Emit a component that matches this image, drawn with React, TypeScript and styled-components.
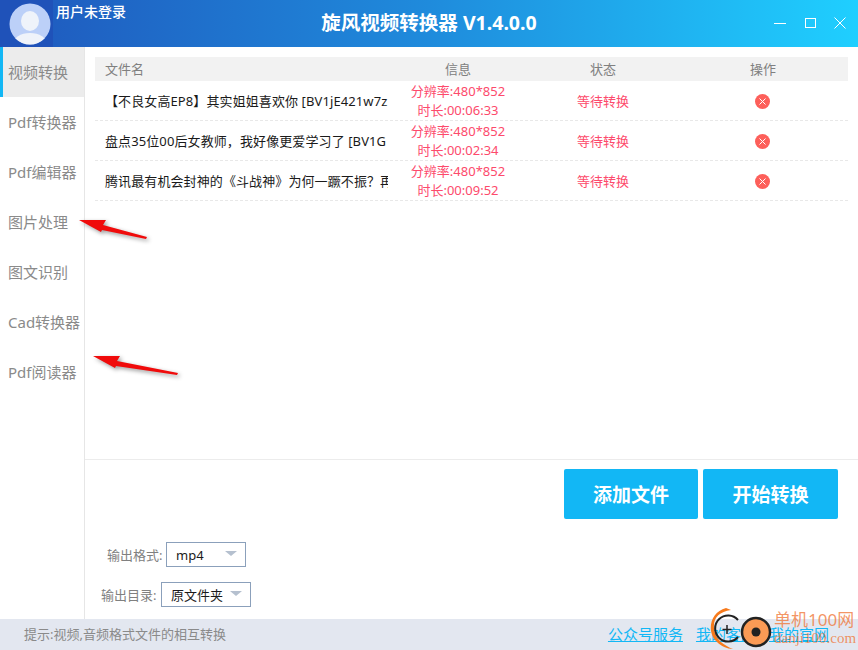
import React from 'react'
import styled, { createGlobalStyle } from 'styled-components'

const FONT = `"Noto Sans", "Noto Sans CJK SC", sans-serif`

const files = [
  { name: '【不良女高EP8】其实姐姐喜欢你 [BV1jE421w7z', time: '00:06:33' },
  { name: '盘点35位00后女教师，我好像更爱学习了 [BV1G', time: '00:02:34' },
  { name: '腾讯最有机会封神的《斗战神》为何一蹶不振？再', time: '00:09:52' },
]

const navItems = ['视频转换', 'Pdf转换器', 'Pdf编辑器', '图片处理', '图文识别', 'Cad转换器', 'Pdf阅读器']

const App = () => {
  return (
    <Window>
      <GlobalStyle />
      <TitleBar>
        <AvatarBox>
          <svg width="42" height="42" viewBox="0 0 42 42">
            <defs>
              <clipPath id="av">
                <circle cx="21" cy="21" r="20.5" />
              </clipPath>
            </defs>
            <circle cx="21" cy="21" r="20.5" fill="#bcd0f8" />
            <g clipPath="url(#av)" fill="#eff3fa">
              <ellipse cx="21" cy="18" rx="9" ry="10" />
              <ellipse cx="21" cy="41" rx="17" ry="11" />
            </g>
          </svg>
        </AvatarBox>
        <UserName>用户未登录</UserName>
        <AppTitle>旋风视频转换器 V1.4.0.0</AppTitle>
        <WindowControls>
          <svg width="12" height="12" viewBox="0 0 12 12">
            <path d="M0 6.5h12" stroke="#fff" strokeWidth="1" />
          </svg>
          <svg width="12" height="12" viewBox="0 0 12 12">
            <rect x="1.5" y="1.5" width="10" height="9" fill="none" stroke="#fff" strokeWidth="1" />
          </svg>
          <svg width="12" height="12" viewBox="0 0 12 12">
            <path d="M.5.5l11 11M11.5.5l-11 11" stroke="#fff" strokeWidth="1" fill="none" />
          </svg>
        </WindowControls>
      </TitleBar>

      <Body>
        <Sidebar>
          {navItems.map((item, i) => (
            <NavItem key={item} $active={i === 0}>
              {item}
            </NavItem>
          ))}
        </Sidebar>
        <Main>
          <TableArea>
            <TableHead>
              <NameHead>文件名</NameHead>
              <InfoCell>信息</InfoCell>
              <div>状态</div>
              <ActionCell>操作</ActionCell>
            </TableHead>
            {files.map((file) => (
              <Row key={file.time}>
                <NameCell>{file.name}</NameCell>
                <InfoCell>
                  <RedLine>分辨率:480*852</RedLine>
                  <RedLine>时长:{file.time}</RedLine>
                </InfoCell>
                <StatusCell>等待转换</StatusCell>
                <ActionCell>
                  <CloseIcon width="15" height="15" viewBox="0 0 15 15">
                    <circle cx="7.5" cy="7.5" r="7.5" fill="#fd5f5a" />
                    <path d="M4.5 4.5l6 6M10.500 4.500l-6 6" stroke="#fff" strokeWidth="1" />
                  </CloseIcon>
                </ActionCell>
              </Row>
            ))}
          </TableArea>

          <BottomPanel>
            <ButtonRow>
              <ActionButton>添加文件</ActionButton>
              <ActionButton>开始转换</ActionButton>
            </ButtonRow>
            <FieldRow $left={22} $top={23} $gap={4}>
              <FieldLabel>输出格式:</FieldLabel>
              <Select $width={80}>
                <SelectValue>mp4</SelectValue>
              </Select>
            </FieldRow>
            <FieldRow $left={16} $top={15} $gap={5}>
              <FieldLabel>输出目录:</FieldLabel>
              <Select $width={90}>
                <SelectValue>原文件夹</SelectValue>
              </Select>
            </FieldRow>
          </BottomPanel>
        </Main>
      </Body>

      <Footer>
        <Hint>提示:视频,音频格式文件的相互转换</Hint>
        <FooterLinks>
          <FooterLink>公众号服务</FooterLink>
          <FooterLink>我的客服</FooterLink>
          <FooterLink>我的官网</FooterLink>
        </FooterLinks>
      </Footer>

      <Arrow $left={76} $top={214} width="76" height="30" viewBox="0 0 76 30">
        <path d="M3 6 L30 6 L27 11 L71 23 L70 25 L26 16 L25 18 Z" fill="#f00b0b" />
      </Arrow>
      <Arrow $left={90} $top={350} width="92" height="30" viewBox="0 0 92 30">
        <path d="M3 6 L30 6 L27 11 L88 23 L87 25 L26 16 L25 18 Z" fill="#f00b0b" />
      </Arrow>

      <WatermarkLogo width="68" height="44" viewBox="0 0 68 44">
        <path d="M18 2 C2 6 -2 26 9 36 C13 40 19 43 25 43 C15 39 7 33 6 22 C5 12 11 6 23 4 Z" fill="#f77a1c" />
        <path d="M30 14 A13 13 0 1 0 30 31" fill="none" stroke="#222" strokeWidth="2" />
        <path d="M19 19v9M14.500 23.500h9" stroke="#222" strokeWidth="1.500" />
        <circle cx="48" cy="26" r="14" fill="#fb9a55" stroke="#222" strokeWidth="2.500" />
        <circle cx="48" cy="26" r="4.500" fill="#222" />
      </WatermarkLogo>
      <WatermarkText>
        <WatermarkTop>单机100网</WatermarkTop>
        <WatermarkBottom>danji100.com</WatermarkBottom>
      </WatermarkText>
    </Window>
  )
}

const GlobalStyle = createGlobalStyle`
  html, body {
    margin: 0;
    padding: 0;
    background: #fff;
  }
  * {
    box-sizing: border-box;
  }
`

const Window = styled.div`
  position: relative;
  display: flex;
  flex-direction: column;
  width: 858px;
  height: 650px;
  overflow: hidden;
  background: #fff;
  font-family: ${FONT};
`

const TitleBar = styled.header`
  position: relative;
  display: flex;
  align-items: flex-start;
  height: 47px;
  flex: none;
  background: linear-gradient(90deg, #1f58bd 0%, #1f8bdc 50%, #1fcfff 100%);
  color: #fff;
`

const AvatarBox = styled.div`
  display: flex;
  align-items: center;
  justify-content: center;
  width: 53px;
  height: 47px;
  flex: none;
  padding: 1px 0 0 7px;
  background: #1f52b9;
`

const UserName = styled.div`
  margin: 3px 0 0 3px;
  font-size: 14px;
  line-height: 18px;
  font-weight: 500;
`

const AppTitle = styled.h1`
  position: absolute;
  left: 0;
  right: 0;
  top: 11px;
  margin: 0;
  text-align: center;
  font-size: 19.5px;
  line-height: 24px;
  font-weight: 700;
`

const WindowControls = styled.div`
  margin-left: auto;
  display: flex;
  gap: 18px;
  padding: 17px 12px 0 0;
`

const Body = styled.div`
  display: flex;
  flex: 1;
  min-height: 0;
`

const Sidebar = styled.nav`
  width: 85px;
  flex: none;
  border-right: 1px solid #e6e6e6;
`

const NavItem = styled.div<{ $active?: boolean }>`
  display: flex;
  align-items: center;
  height: 50px;
  padding-bottom: 2px;
  padding-left: ${(p) => (p.$active ? 5 : 8)}px;
  border-left: ${(p) => (p.$active ? '3px solid #12b7f5' : 'none')};
  background: ${(p) => (p.$active ? '#ececec' : 'transparent')};
  color: #8a8a8a;
  font-size: 15px;
  white-space: nowrap;
`

const Main = styled.main`
  display: flex;
  flex-direction: column;
  flex: 1;
  min-width: 0;
`

const TableArea = styled.section`
  flex: 1;
  padding: 10px 10px 0;
`

const TableHead = styled.div`
  display: grid;
  grid-template-columns: 293px 140px 150px 170px;
  align-items: center;
  height: 24px;
  padding-bottom: 2px;
  background: #f2f2f2;
  color: #808080;
  font-size: 13px;
  text-align: center;
`

const NameHead = styled.div`
  padding-left: 10px;
  text-align: left;
`

const Row = styled.div`
  display: grid;
  grid-template-columns: 293px 140px 150px 170px;
  align-items: center;
  height: 40px;
  border-bottom: 1px dashed #e8e8e8;
  text-align: center;
  font-size: 13px;
`

const NameCell = styled.div`
  padding-left: 10px;
  overflow: hidden;
  white-space: nowrap;
  text-align: left;
  letter-spacing: 0.1px;
  color: #1a1a1a;
`

const InfoCell = styled.div`
  display: flex;
  flex-direction: column;
  align-items: center;
`

const RedLine = styled.div`
  color: #fd4a6c;
  line-height: 19px;
  white-space: nowrap;
`

const StatusCell = styled.div`
  color: #fd4a6c;
`

const ActionCell = styled.div`
  display: flex;
  align-items: center;
  justify-content: center;
`

const CloseIcon = styled.svg`
  display: block;
  margin: 1px 1px 0 0;
`

const BottomPanel = styled.section`
  height: 160px;
  flex: none;
  border-top: 1px solid #ececec;
`

const ButtonRow = styled.div`
  display: flex;
  justify-content: flex-end;
  gap: 5px;
  padding: 9px 20px 0 0;
`

const ActionButton = styled.button`
  width: 135px;
  height: 50px;
  padding: 0;
  border: none;
  border-radius: 2px;
  background: #12b7f5;
  color: #fff;
  font-family: ${FONT};
  font-size: 19px;
  font-weight: 700;
  &:first-child {
    width: 134px;
  }
`

const FieldRow = styled.div<{ $left: number; $top: number; $gap: number }>`
  display: flex;
  align-items: center;
  gap: ${(p) => p.$gap}px;
  margin: ${(p) => p.$top}px 0 0 ${(p) => p.$left}px;
`

const FieldLabel = styled.span`
  width: 55px;
  color: #808080;
  font-size: 13px;
  white-space: nowrap;
`

const Select = styled.div<{ $width: number }>`
  position: relative;
  display: flex;
  align-items: center;
  width: ${(p) => p.$width}px;
  height: 25px;
  padding-left: 9px;
  border: 1px solid #8ba0bb;
  background: #fff;
  &::after {
    content: '';
    position: absolute;
    right: 8px;
    top: 8px;
    border-left: 6px solid transparent;
    border-right: 6px solid transparent;
    border-top: 5px solid #b5c0cf;
  }
`

const SelectValue = styled.span`
  color: #1a1a1a;
  font-size: 13px;
`

const Footer = styled.footer`
  display: flex;
  align-items: center;
  justify-content: space-between;
  height: 31px;
  flex: none;
  padding: 0 29px 2px 24px;
  background: #e3e7f0;
`

const Hint = styled.span`
  color: #8a8a8a;
  font-size: 13px;
`

const FooterLinks = styled.div`
  display: flex;
  gap: 13px;
`

const FooterLink = styled.a`
  color: #12b7f5;
  font-size: 15px;
  text-decoration: underline;
`

const Arrow = styled.svg<{ $left: number; $top: number }>`
  position: absolute;
  left: ${(p) => p.$left}px;
  top: ${(p) => p.$top}px;
  filter: drop-shadow(2px 2px 2px rgba(0, 0, 0, 0.4));
`

const WatermarkLogo = styled.svg`
  position: absolute;
  left: 708px;
  top: 606px;
`

const WatermarkText = styled.div`
  position: absolute;
  left: 774px;
  top: 610px;
  color: rgba(240, 115, 50, 0.75);
  white-space: nowrap;
`

const WatermarkTop = styled.div`
  font-size: 17px;
  line-height: 20px;
`

const WatermarkBottom = styled.div`
  font-family: "Liberation Serif", serif;
  font-size: 15px;
  line-height: 16px;
`

export default App
